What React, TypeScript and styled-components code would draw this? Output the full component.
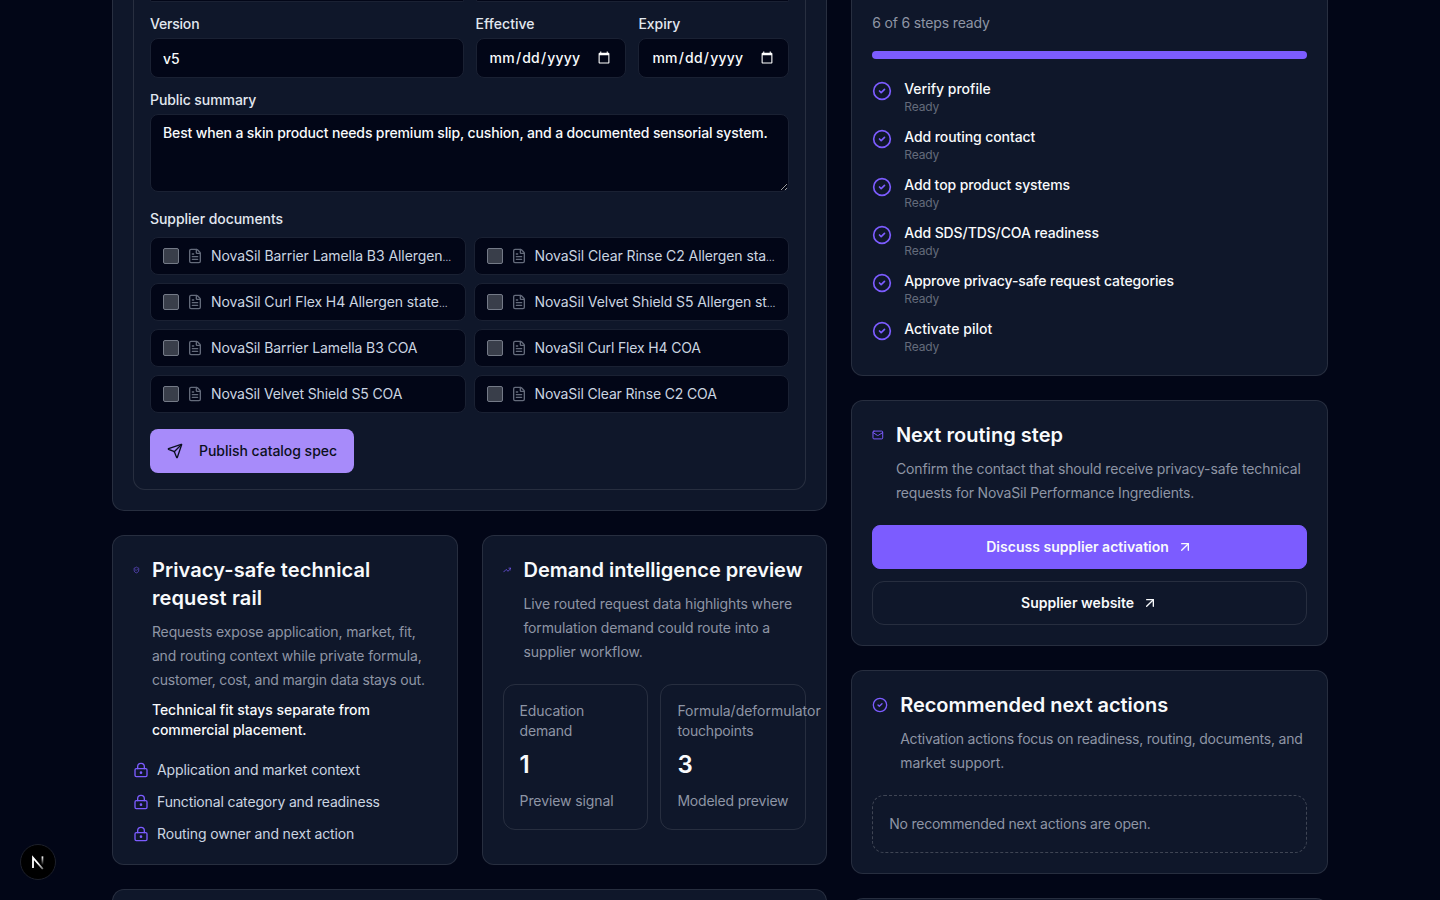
import React from 'react';
import styled, { createGlobalStyle, css } from 'styled-components';
import {
  ArrowUpRight,
  CircleCheck,
  FileText,
  LockKeyhole,
  Mail,
  Send,
  ShieldCheck,
  TrendingUp,
} from 'lucide-react';

const color = {
  page: '#020617',
  card: '#0f172a',
  field: '#020617',
  border: 'rgba(255, 255, 255, 0.1)',
  fieldBorder: '#1a2133',
  accent: '#7c5cff',
  accentSoft: '#a78bfa',
  text: '#f8fafc',
  label: '#e2e8f0',
  body: '#cbd5e1',
  muted: '#8e95a5',
  faint: '#646b7b',
};

const GlobalStyle = createGlobalStyle`
  * { box-sizing: border-box; }
  html { color-scheme: dark; }
  body {
    margin: 0;
    overflow: hidden;
    background: ${color.page};
    color: ${color.text};
    font-family: Inter, "Liberation Sans", sans-serif;
    font-size: 14px;
    line-height: 20px;
  }
  h2, p, ul { margin: 0; padding: 0; }
  ul { list-style: none; }
`;

/* ---------- text ---------- */

type LineData = [text: string, tracking: number];

const Tracked = styled.span<{ $tracking: number; $block?: boolean }>`
  display: ${(p) => (p.$block ? 'block' : 'inline')};
  letter-spacing: ${(p) => p.$tracking}px;
  white-space: nowrap;
`;

const Ellipsis = styled.span`
  font-size: 10px;
`;

function Lines({ lines }: { lines: LineData[] }) {
  return (
    <>
      {lines.map(([text, tracking]) => (
        <Tracked key={text} $tracking={tracking} $block>
          {text}
        </Tracked>
      ))}
    </>
  );
}

/* ---------- page ---------- */

const Page = styled.main`
  display: grid;
  grid-template-columns: minmax(0, 1.5fr) minmax(0, 1fr);
  align-items: start;
  gap: 24px;
  width: 1216px;
  height: 900px;
  margin: 0 auto;
  overflow: hidden;
`;

const Column = styled.div`
  display: flex;
  flex-direction: column;
  gap: 24px;
`;

const Card = styled.section<{ $continued?: boolean }>`
  padding: 20px;
  border: 1px solid ${color.border};
  border-radius: 12px;
  background: ${color.card};
  ${(p) =>
    p.$continued &&
    css`
      padding-top: 0;
      border-top: 0;
      border-top-left-radius: 0;
      border-top-right-radius: 0;
    `}
`;

const NextCard = styled(Card)`
  height: 120px;
`;

const CardPair = styled.div`
  display: grid;
  grid-template-columns: repeat(2, minmax(0, 1fr));
  gap: 24px;
`;

/* ---------- form ---------- */

const FormPanel = styled.form`
  display: flex;
  flex-direction: column;
  padding: 0 16px 16px;
  border: 1px solid ${color.border};
  border-top: 0;
  border-radius: 0 0 12px 12px;
`;

const FieldRow = styled.div`
  display: grid;
  grid-template-columns: repeat(2, minmax(0, 1fr));
  gap: 12px;
`;

const Field = styled.label`
  display: flex;
  flex-direction: column;
  gap: 4px;
  color: ${color.label};
  font-weight: 500;
`;

const fieldBox = css`
  display: block;
  width: 100%;
  margin: 0;
  border: 1px solid ${color.fieldBorder};
  border-radius: 8px;
  background: ${color.field};
  color: ${color.text};
  font: 500 14px/20px Inter, "Liberation Sans", sans-serif;
  outline: none;
`;

const Input = styled.input`
  ${fieldBox}
  height: 40px;
  padding: 8px 12px;
`;

const DateInput = styled(Input)`
  letter-spacing: 0.2px;
`;

const CutField = styled.div`
  ${fieldBox}
  height: 2px;
  border-top: 0;
  border-radius: 0 0 8px 8px;
`;

const TextArea = styled.textarea`
  ${fieldBox}
  height: 78px;
  padding: 8px 12px;
  letter-spacing: -0.143px;
  resize: vertical;
`;

const FormBlock = styled.div<{ $top: number }>`
  margin-top: ${(p) => p.$top}px;
`;

const DocumentGrid = styled.div`
  display: grid;
  grid-template-columns: repeat(2, minmax(0, 1fr));
  gap: 8px;
  margin-top: 8px;
`;

const DocumentRow = styled.label`
  display: flex;
  align-items: center;
  gap: 8px;
  height: 38px;
  padding: 0 12px;
  border: 1px solid ${color.fieldBorder};
  border-radius: 8px;
  background: ${color.field};
  color: ${color.body};
  svg { flex: none; color: ${color.faint}; }
`;

const Checkbox = styled.input`
  appearance: none;
  flex: none;
  width: 16px;
  height: 16px;
  margin: 0;
  border: 1px solid #747a87;
  border-radius: 2px;
  background: #393e4a;
`;

const GroupLabel = styled.div`
  color: ${color.label};
  font-weight: 500;
`;

const PublishButton = styled.button`
  display: flex;
  align-items: center;
  align-self: flex-start;
  gap: 16px;
  width: 204px;
  height: 44px;
  margin-top: 16px;
  padding: 0 17px;
  border: 0;
  border-radius: 8px;
  background: ${color.accentSoft};
  color: #0b1020;
  font: 500 14px/20px Inter, "Liberation Sans", sans-serif;
`;

/* ---------- card header ---------- */

const Header = styled.header<{ $icon: number }>`
  display: grid;
  grid-template-columns: ${(p) => p.$icon}px minmax(0, 1fr);
  gap: 12px;
  > svg {
    width: 100%;
    height: 20px;
    margin-top: 4px;
    color: ${color.accent};
  }
`;

const Title = styled.h2`
  font-size: 20px;
  font-weight: 600;
  line-height: 28px;
`;

const Description = styled.p`
  margin-top: 8px;
  color: ${color.muted};
  line-height: 24px;
`;

const Emphasis = styled.p`
  margin-top: 8px;
  font-weight: 500;
`;

/* ---------- lists and stats ---------- */

const LockList = styled.ul`
  display: flex;
  flex-direction: column;
  gap: 12px;
  margin-top: 20px;
`;

const LockItem = styled.li`
  display: flex;
  align-items: center;
  gap: 8px;
  color: ${color.body};
  svg { color: ${color.accent}; }
`;

const StatGrid = styled.div`
  display: grid;
  grid-template-columns: repeat(2, minmax(0, 1fr));
  gap: 12px;
  margin-top: 20px;
`;

const Stat = styled.div`
  padding: 16px;
  border: 1px solid ${color.border};
  border-radius: 12px;
  color: ${color.muted};
`;

const StatValue = styled.p`
  margin-top: 8px;
  color: ${color.text};
  font-size: 24px;
  font-weight: 600;
  line-height: 32px;
`;

const StatNote = styled.p`
  margin-top: 8px;
  line-height: 24px;
`;

const Progress = styled.div`
  height: 8px;
  margin: 18px 0 20px;
  border-radius: 4px;
  background: ${color.accent};
`;

const ReadySummary = styled.p`
  padding-top: 13px;
  color: ${color.muted};
`;

const StepList = styled.ul`
  display: flex;
  flex-direction: column;
  gap: 12px;
`;

const Step = styled.li`
  display: flex;
  gap: 12px;
  svg { flex: none; margin-top: 2px; color: ${color.accent}; }
`;

const StepTitle = styled.p`
  font-weight: 500;
`;

const StepState = styled.p`
  color: ${color.faint};
  font-size: 12px;
  line-height: 16px;
`;

const ActionLink = styled.a<{ $outlined?: boolean }>`
  display: flex;
  align-items: center;
  justify-content: center;
  gap: 8px;
  height: 44px;
  margin-top: ${(p) => (p.$outlined ? 12 : 20)}px;
  border: 1px solid ${(p) => (p.$outlined ? color.border : color.accent)};
  border-radius: ${(p) => (p.$outlined ? 12 : 8)}px;
  background: ${(p) => (p.$outlined ? 'transparent' : color.accent)};
  font-weight: 600;
`;

const EmptyState = styled.div`
  margin-top: 20px;
  padding: 16px;
  border: 1px dashed rgba(255, 255, 255, 0.2);
  border-radius: 12px;
  color: ${color.muted};
  line-height: 24px;
`;

const DevBadge = styled.div`
  position: fixed;
  left: 20px;
  bottom: 20px;
  display: grid;
  place-items: center;
  width: 36px;
  height: 36px;
  border: 1px solid #1d202b;
  border-radius: 50%;
  background: #000;
`;

/* ---------- data ---------- */

const documents: { name: string; tracking: number; cut?: boolean }[] = [
  { name: 'NovaSil Barrier Lamella B3 Allergen', tracking: -0.071, cut: true },
  { name: 'NovaSil Clear Rinse C2 Allergen sta', tracking: -0.083, cut: true },
  { name: 'NovaSil Curl Flex H4 Allergen state', tracking: -0.087, cut: true },
  { name: 'NovaSil Velvet Shield S5 Allergen st', tracking: -0.094, cut: true },
  { name: 'NovaSil Barrier Lamella B3 COA', tracking: -0.103 },
  { name: 'NovaSil Curl Flex H4 COA', tracking: -0.155 },
  { name: 'NovaSil Velvet Shield S5 COA', tracking: -0.14 },
  { name: 'NovaSil Clear Rinse C2 COA', tracking: -0.15 },
];

const steps: LineData[] = [
  ['Verify profile', 0],
  ['Add routing contact', -0.08],
  ['Add top product systems', -0.107],
  ['Add SDS/TDS/COA readiness', -0.098],
  ['Approve privacy-safe request categories', -0.107],
  ['Activate pilot', 0.04],
];

const safeItems: LineData[] = [
  ['Application and market context', -0.1],
  ['Functional category and readiness', -0.158],
  ['Routing owner and next action', -0.139],
];

const stats: { label: LineData[]; value: string; note: LineData }[] = [
  {
    label: [['Education', -0.14], ['demand', -0.2]],
    value: '1',
    note: ['Preview signal', -0.1],
  },
  {
    label: [['Formula/deformulator', -0.024], ['touchpoints', -0.17]],
    value: '3',
    note: ['Modeled preview', -0.2],
  },
];

function NextLogo() {
  return (
    <svg width="14" height="15" viewBox="0 0 14 15" fill="none">
      <defs>
        <linearGradient id="diagonal" x1="7" y1="8" x2="12.5" y2="14.5" gradientUnits="userSpaceOnUse">
          <stop stopColor="#fff" />
          <stop offset="1" stopColor="#fff" stopOpacity="0.4" />
        </linearGradient>
        <linearGradient id="stem" x1="0" y1="1.5" x2="0" y2="10" gradientUnits="userSpaceOnUse">
          <stop stopColor="#fff" />
          <stop offset="1" stopColor="#fff" stopOpacity="0" />
        </linearGradient>
      </defs>
      <path d="M2 13V2.6L11.8 14" stroke="url(#diagonal)" strokeWidth="1.8" />
      <rect x="10.6" y="1.4" width="1.7" height="8.6" fill="url(#stem)" />
    </svg>
  );
}

export default function App() {
  return (
    <>
      <GlobalStyle />
      <Page>
        <Column>
          <Card $continued>
            <FormPanel>
              <FieldRow>
                <CutField />
                <CutField />
              </FieldRow>
              <FormBlock $top={12}>
                <FieldRow>
                  <Field>
                    <Tracked $tracking={-0.2}>Version</Tracked>
                    <Input defaultValue="v5" />
                  </Field>
                  <FieldRow>
                    <Field>
                      <Tracked $tracking={0.03}>Effective</Tracked>
                      <DateInput type="date" />
                    </Field>
                    <Field>
                      <Tracked $tracking={-0.03}>Expiry</Tracked>
                      <DateInput type="date" />
                    </Field>
                  </FieldRow>
                </FieldRow>
              </FormBlock>
              <FormBlock $top={12}>
                <Field>
                  <Tracked $tracking={-0.08}>Public summary</Tracked>
                  <TextArea defaultValue="Best when a skin product needs premium slip, cushion, and a documented sensorial system." />
                </Field>
              </FormBlock>
              <FormBlock $top={17}>
                <GroupLabel>
                  <Lines lines={[['Supplier documents', -0.061]]} />
                </GroupLabel>
                <DocumentGrid>
                  {documents.map(({ name, tracking, cut }) => (
                    <DocumentRow key={name}>
                      <Checkbox type="checkbox" />
                      <FileText size={16} />
                      <Tracked $tracking={tracking}>
                        {name}
                        {cut && <Ellipsis>…</Ellipsis>}
                      </Tracked>
                    </DocumentRow>
                  ))}
                </DocumentGrid>
              </FormBlock>
              <PublishButton type="button">
                <Send size={16} />
                <Tracked $tracking={-0.03}>Publish catalog spec</Tracked>
              </PublishButton>
            </FormPanel>
          </Card>

          <CardPair>
            <Card>
              <Header $icon={6.9}>
                <ShieldCheck />
                <div>
                  <Title>
                    <Lines lines={[['Privacy-safe technical', 0.11], ['request rail', 0.13]]} />
                  </Title>
                  <Description>
                    <Lines
                      lines={[
                        ['Requests expose application, market, fit,', -0.11],
                        ['and routing context while private formula,', -0.132],
                        ['customer, cost, and margin data stays out.', -0.186],
                      ]}
                    />
                  </Description>
                  <Emphasis>
                    <Lines
                      lines={[
                        ['Technical fit stays separate from', -0.02],
                        ['commercial placement.', -0.07],
                      ]}
                    />
                  </Emphasis>
                </div>
              </Header>
              <LockList>
                {safeItems.map(([text, tracking]) => (
                  <LockItem key={text}>
                    <LockKeyhole size={16} />
                    <Tracked $tracking={tracking}>{text}</Tracked>
                  </LockItem>
                ))}
              </LockList>
            </Card>

            <Card>
              <Header $icon={8.9}>
                <TrendingUp />
                <div>
                  <Title>
                    <Lines lines={[['Demand intelligence preview', -0.01]]} />
                  </Title>
                  <Description>
                    <Lines
                      lines={[
                        ['Live routed request data highlights where', -0.13],
                        ['formulation demand could route into a', -0.14],
                        ['supplier workflow.', -0.093],
                      ]}
                    />
                  </Description>
                </div>
              </Header>
              <StatGrid>
                {stats.map((stat) => (
                  <Stat key={stat.value}>
                    <Lines lines={stat.label} />
                    <StatValue>{stat.value}</StatValue>
                    <StatNote>
                      <Lines lines={[stat.note]} />
                    </StatNote>
                  </Stat>
                ))}
              </StatGrid>
            </Card>
          </CardPair>

          <NextCard />
        </Column>

        <Column>
          <Card $continued>
            <ReadySummary>
              <Lines lines={[['6 of 6 steps ready', -0.16]]} />
            </ReadySummary>
            <Progress />
            <StepList>
              {steps.map(([title, tracking]) => (
                <Step key={title}>
                  <CircleCheck size={20} />
                  <div>
                    <StepTitle>
                      <Lines lines={[[title, tracking]]} />
                    </StepTitle>
                    <StepState>
                      <Lines lines={[['Ready', -0.1]]} />
                    </StepState>
                  </div>
                </Step>
              ))}
            </StepList>
          </Card>

          <Card>
            <Header $icon={11.7}>
              <Mail />
              <div>
                <Title>
                  <Lines lines={[['Next routing step', 0.04]]} />
                </Title>
                <Description>
                  <Lines
                    lines={[
                      ['Confirm the contact that should receive privacy-safe technical', -0.12],
                      ['requests for NovaSil Performance Ingredients.', -0.16],
                    ]}
                  />
                </Description>
              </div>
            </Header>
            <ActionLink>
              <Tracked $tracking={0.02}>Discuss supplier activation</Tracked>
              <ArrowUpRight size={16} />
            </ActionLink>
            <ActionLink $outlined>
              <Tracked $tracking={0.02}>Supplier website</Tracked>
              <ArrowUpRight size={16} />
            </ActionLink>
          </Card>

          <Card>
            <Header $icon={16}>
              <CircleCheck />
              <div>
                <Title>
                  <Lines lines={[['Recommended next actions', -0.03]]} />
                </Title>
                <Description>
                  <Lines
                    lines={[
                      ['Activation actions focus on readiness, routing, documents, and', -0.226],
                      ['market support.', -0.06],
                    ]}
                  />
                </Description>
              </div>
            </Header>
            <EmptyState>
              <Lines lines={[['No recommended next actions are open.', -0.22]]} />
            </EmptyState>
          </Card>

          <NextCard />
        </Column>
      </Page>
      <DevBadge>
        <NextLogo />
      </DevBadge>
    </>
  );
}
